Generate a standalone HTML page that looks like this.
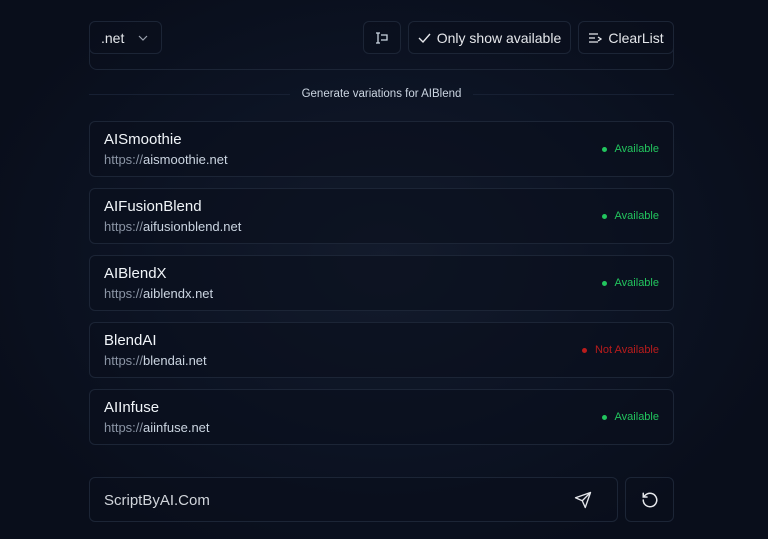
<!DOCTYPE html>
<html><head><style>
*{box-sizing:border-box;margin:0;padding:0}
body{width:768px;height:539px;overflow:hidden;background:radial-gradient(ellipse 420px 320px at 384px 260px,#131b2c 0%,#0c1323 60%,#090e1b 100%);font-family:"Liberation Sans",sans-serif;color:#e5e7eb;position:relative}
.b{position:absolute;border:1px solid #1c2536;border-radius:6px;background:rgba(10,15,28,.6)}
.btn{display:flex;align-items:center;justify-content:center;font-size:14px;color:#e5e7eb;gap:6px}
.card{left:89px;width:585px;height:56px}
.t{position:absolute;left:14px;top:9px;font-size:15px;color:#f1f5f9}
.u{position:absolute;left:14px;top:30px;font-size:13px;color:#cbd5e1}
.u span{color:#8b95a5}
.s{position:absolute;right:14px;top:21px;font-size:11px;color:#22c55e;display:flex;align-items:center;gap:8px}
.s i{width:5px;height:5px;border-radius:50%;background:#22c55e;display:block}
.s.n{color:#b91c1c}.s.n i{background:#b91c1c}
.sep{position:absolute;left:89px;top:88px;width:585px;display:flex;align-items:center;gap:12px;font-size:11.5px;color:#cbd5e1}
.sep b{flex:1;height:1px;background:#172033}
</style></head><body>
<div class="b btn" style="left:89px;top:21px;width:73px;height:33px;justify-content:flex-start;padding-left:11px;gap:14px">.net <svg width="10" height="6" viewBox="0 0 10 6"><path d="M1 1l4 4 4-4" stroke="#9ca3af" fill="none" stroke-width="1.2"/></svg></div>
<div class="b btn" style="left:363px;top:21px;width:38px;height:33px"><svg width="16" height="14" viewBox="0 0 16 14" fill="none" stroke="#cbd5e1" stroke-width="1.3"><path d="M4 2v10M2 2h4M2 12h4M7 4h6v5H7"/></svg></div>
<div class="b btn" style="left:408px;top:21px;width:163px;height:33px"><svg width="13" height="10" viewBox="0 0 13 10"><path d="M1 5l4 4 7-8" stroke="#e5e7eb" fill="none" stroke-width="1.4"/></svg>Only show available</div>
<div class="b btn" style="left:578px;top:21px;width:96px;height:33px"><svg width="14" height="12" viewBox="0 0 14 12" fill="none" stroke="#e5e7eb" stroke-width="1.3"><path d="M1 2h9M1 6h6M1 10h9M10 5l3 2-3 2"/></svg>ClearList</div>
<div style="position:absolute;left:89px;top:40px;width:585px;height:30px;border:1px solid #1c2536;border-top:none;border-radius:0 0 8px 8px"></div>
<div class="sep"><b></b>Generate variations for AIBlend<b></b></div>
<div class="b card" style="top:121px"><div class="t">AISmoothie</div><div class="u"><span>https://</span>aismoothie.net</div><div class="s"><i></i>Available</div></div>
<div class="b card" style="top:188px"><div class="t">AIFusionBlend</div><div class="u"><span>https://</span>aifusionblend.net</div><div class="s"><i></i>Available</div></div>
<div class="b card" style="top:255px"><div class="t">AIBlendX</div><div class="u"><span>https://</span>aiblendx.net</div><div class="s"><i></i>Available</div></div>
<div class="b card" style="top:322px"><div class="t">BlendAI</div><div class="u"><span>https://</span>blendai.net</div><div class="s n"><i></i>Not Available</div></div>
<div class="b card" style="top:389px"><div class="t">AIInfuse</div><div class="u"><span>https://</span>aiinfuse.net</div><div class="s"><i></i>Available</div></div>
<div class="b" style="left:89px;top:477px;width:529px;height:45px"><div style="position:absolute;left:14px;top:14px;font-size:15px;color:#d1d5db">ScriptByAI.Com</div><svg style="position:absolute;left:484px;top:13px" width="18" height="18" viewBox="0 0 24 24" fill="none" stroke="#e5e7eb" stroke-width="1.8" stroke-linejoin="round"><path d="M22 2L11 13M22 2l-7 20-4-9-9-4z"/></svg></div>
<div class="b btn" style="left:625px;top:477px;width:49px;height:45px"><svg width="18" height="18" viewBox="0 0 24 24" fill="none" stroke="#e5e7eb" stroke-width="2" stroke-linecap="round"><path d="M3 12a9 9 0 1 0 3-6.7L3 8M3 3v5h5"/></svg></div>
</body></html>
